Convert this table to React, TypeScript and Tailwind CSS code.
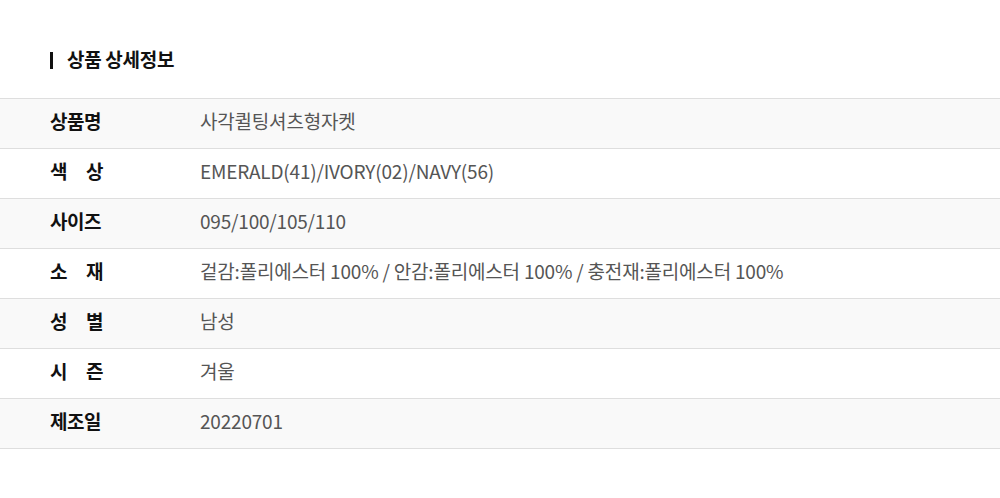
const rows: { label: string[]; value: string }[] = [
  { label: ['상품명'], value: '사각퀼팅셔츠형자켓' },
  { label: ['색', '상'], value: 'EMERALD(41)/IVORY(02)/NAVY(56)' },
  { label: ['사이즈'], value: '095/100/105/110' },
  { label: ['소', '재'], value: '겉감:폴리에스터 100% / 안감:폴리에스터 100% / 충전재:폴리에스터 100%' },
  { label: ['성', '별'], value: '남성' },
  { label: ['시', '즌'], value: '겨울' },
  { label: ['제조일'], value: '20220701' },
];

export default function App() {
  return (
    <div
      className="w-[1000px] h-[498px] bg-white pt-[50px]"
      style={{ fontFamily: '"Noto Sans CJK KR", "Noto Sans", sans-serif' }}
    >
      <div className="flex items-center h-[20px] pl-[50px]">
        <span className="w-[3px] h-[17px] bg-[#111]" />
        <h2 className="ml-[14px] text-[19px] font-bold text-[#111] tracking-[-0.3px] -translate-y-px">상품 상세정보</h2>
      </div>
      <div className="mt-[28px] border-t border-[#dedede]">
        {rows.map((row, i) => (
          <div
            key={i}
            className={`flex items-center h-[50px] pb-[5px] border-b border-[#dedede] ${i % 2 === 0 ? 'bg-[#f9f9f9]' : 'bg-white'}`}
          >
            <div className="w-[200px] shrink-0 pl-[50px]">
              <div
                className={`w-[53px] flex text-[19px] leading-[24px] font-bold text-[#111] tracking-[-0.5px] ${row.label.length > 1 ? 'justify-between' : ''}`}
              >
                {row.label.map((l, j) => (
                  <span key={j}>{l}</span>
                ))}
              </div>
            </div>
            <div className="text-[19px] leading-[24px] text-[#555] tracking-[-0.2px]">{row.value}</div>
          </div>
        ))}
      </div>
    </div>
  );
}
